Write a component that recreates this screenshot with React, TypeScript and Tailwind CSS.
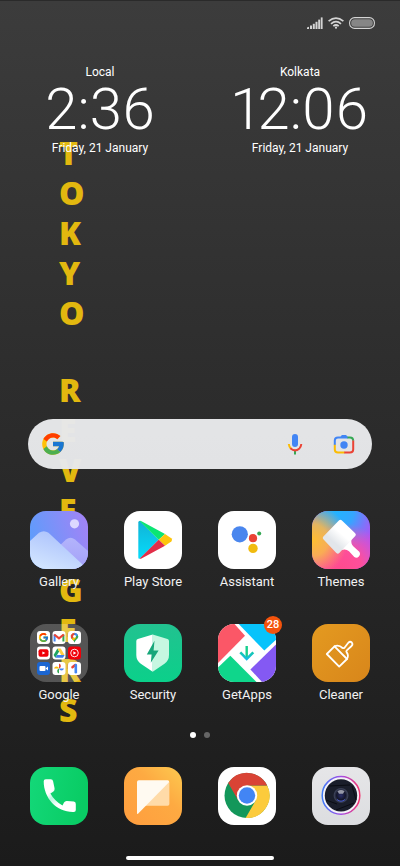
import React from 'react';
import { FcGoogle } from 'react-icons/fc';

interface AppItem {
  name: string;
  icon: React.ReactNode;
  badge?: string;
}

const wallpaperLetters = 'TOKYO REVENGERS'.split('');

const Svg = ({ children }: { children: React.ReactNode }) => (
  <svg viewBox="0 0 58 58" className="size-full" aria-hidden="true">
    {children}
  </svg>
);

const GalleryIcon = () => (
  <Svg>
    <defs>
      <linearGradient id="gal-bg" x1="0" y1="0.6" x2="1" y2="0.3">
        <stop offset="0" stopColor="#5c9dfb" />
        <stop offset="1" stopColor="#a084f6" />
      </linearGradient>
      <linearGradient id="gal-front" x1="0.7" y1="0" x2="0.2" y2="1">
        <stop offset="0" stopColor="#a9bffc" />
        <stop offset="1" stopColor="#d3e6ff" />
      </linearGradient>
      <linearGradient id="gal-back" x1="0" y1="0" x2="0" y2="1">
        <stop offset="0" stopColor="#b3b4fb" />
        <stop offset="1" stopColor="#a3a0f8" />
      </linearGradient>
    </defs>
    <rect width="58" height="58" fill="url(#gal-bg)" />
    <circle cx="44.5" cy="12.8" r="4.6" fill="#dcd9ff" />
    <path d="M24 40 L36 28.5 Q40.5 25 45 28.5 L58 40 V58 H30 Z" fill="url(#gal-back)" />
    <path d="M0 30 L9 21.8 Q13.8 18.5 18.5 21.8 L52 53 Q54 55.5 53 58 H0 Z" fill="url(#gal-front)" />
  </Svg>
);

const PlayIcon = () => (
  <Svg>
    <defs>
      <linearGradient id="play-b" x1="0" y1="0" x2="0" y2="1">
        <stop offset="0" stopColor="#12b3d6" />
        <stop offset="1" stopColor="#05dcfb" />
      </linearGradient>
    </defs>
    <rect width="58" height="58" fill="#fff" />
    <path d="M14.3 11.5 Q14.3 9.5 16 10 L34.7 28.8 L16 47.6 Q14.3 48.2 14.3 46.5 Z" fill="url(#play-b)" />
    <path d="M15.5 9.9 Q16.4 9.6 17.5 10.2 L41 23 L34.7 28.8 Z" fill="#0be574" />
    <path d="M41 23 L47.3 27.2 Q49 28.8 47.3 30.4 L41 34.8 L34.7 28.8 Z" fill="#fdc50c" />
    <path d="M34.7 28.8 L41 34.8 L17.5 47.4 Q16.4 48 15.5 47.7 Z" fill="#e22d48" />
  </Svg>
);

const AssistantIcon = () => (
  <Svg>
    <rect width="58" height="58" fill="#fff" />
    <circle cx="21.8" cy="23.3" r="8.1" fill="#4a86ee" />
    <circle cx="35" cy="27.2" r="4.1" fill="#ea4335" />
    <circle cx="41.2" cy="22.4" r="2" fill="#34a853" />
    <circle cx="35" cy="37.4" r="4.7" fill="#f1bb10" />
  </Svg>
);

const ThemesIcon = () => (
  <Svg>
    <defs>
      <radialGradient id="th-y" cx="0" cy="0.5" r="0.62">
        <stop offset="0" stopColor="#ffbf2e" />
        <stop offset="0.45" stopColor="#fbbc45" stopOpacity="0.85" />
        <stop offset="1" stopColor="#f7b051" stopOpacity="0" />
      </radialGradient>
      <radialGradient id="th-b" cx="0.42" cy="0" r="0.75">
        <stop offset="0" stopColor="#22b4ff" />
        <stop offset="0.4" stopColor="#35a6ff" />
        <stop offset="1" stopColor="#5a8cff" stopOpacity="0" />
      </radialGradient>
      <radialGradient id="th-p" cx="0.5" cy="1" r="0.8">
        <stop offset="0" stopColor="#ff4b8e" />
        <stop offset="0.45" stopColor="#fd4f9b" />
        <stop offset="1" stopColor="#ff58a8" stopOpacity="0" />
      </radialGradient>
      <linearGradient id="th-head" x1="0.2" y1="0.8" x2="0.7" y2="0.2">
        <stop offset="0.2" stopColor="#e2e6ea" />
        <stop offset="0.7" stopColor="#fff" />
      </linearGradient>
    </defs>
    <rect width="58" height="58" fill="#b052f5" />
    <rect width="58" height="58" fill="url(#th-b)" />
    <rect width="58" height="58" fill="url(#th-p)" />
    <rect width="58" height="58" fill="url(#th-y)" />
    <path d="M39.5 28 Q38.5 32.5 41.5 35.5 L47.3 40.8 A3.7 3.7 0 0 1 42.3 46 L37 40.3 Q34 37.5 29.5 39 Z" fill="#fff" />
    <path d="M28.3 10.8 L41.8 23.6 L25.8 40.6 L12.8 26.8 Z" fill="url(#th-head)" stroke="url(#th-head)" strokeWidth="4" strokeLinejoin="round" />
  </Svg>
);

const FolderIcon = () => (
  <Svg>
    <rect width="58" height="58" fill="#fff" fillOpacity="0.23" />
    <g fill="#fff">
      <rect x="7" y="7" width="13" height="13" rx="3" />
      <rect x="22.5" y="7" width="13" height="13" rx="3" />
      <rect x="38" y="7" width="13" height="13" rx="3" />
      <rect x="7" y="22.5" width="13" height="13" rx="3" />
      <rect x="22.5" y="22.5" width="13" height="13" rx="3" />
      <rect x="22.5" y="38" width="13" height="13" rx="3" />
      <rect x="38" y="38" width="13" height="13" rx="3" />
    </g>
    <rect x="38" y="22.5" width="13" height="13" rx="3" fill="#f00008" />
    <rect x="7" y="38" width="13" height="13" rx="3" fill="#1b66d2" />
    {/* Google */}
    <FcGoogle x="8" y="8" size={11} />
    {/* Gmail */}
    <path d="M24.6 17.5 V10.5" stroke="#4285f4" strokeWidth="2" />
    <path d="M33.4 17.5 V10.5" stroke="#34a853" strokeWidth="2" />
    <path d="M24.2 10.5 L29 14.4 L33.8 10.5" fill="none" stroke="#ea4335" strokeWidth="2.2" />
    {/* Maps */}
    <path d="M40.8 12.5 A3.8 3.8 0 0 1 48.3 12.5 C48.3 15 45.4 15.5 44.5 18.8 C43.8 15.5 40.8 15.2 40.8 12.5" fill="#34a853" />
    <path d="M41 11.3 A3.8 3.8 0 0 1 44.5 8.7 V12.5 L41.8 15 Q40.4 13.2 41 11.3" fill="#ea4335" />
    <path d="M44.5 8.7 A3.8 3.8 0 0 1 48 11.2 L44.5 13 Z" fill="#4285f4" />
    <path d="M41.8 15 L44.5 12.5 L46 14 L43.5 16.7 Z" fill="#fbbc04" />
    <circle cx="44.5" cy="12.4" r="1.4" fill="#fff" />
    {/* YouTube */}
    <rect x="8.5" y="25.3" width="10" height="7.4" rx="2" fill="#f00008" />
    <path d="M12.4 27.4 L15.4 29 L12.4 30.6 Z" fill="#fff" />
    {/* Drive */}
    <path d="M27.4 24.5 L23.6 31 L25.3 33.8 L29.2 27.4 Z" fill="#1fa463" />
    <path d="M27.4 24.5 H30.7 L34.6 31 H31.2 Z" fill="#ffcf3f" />
    <path d="M25.3 33.8 L27 31 H34.6 L33 33.8 Z" fill="#3f7fe8" />
    {/* YouTube Music */}
    <circle cx="44.5" cy="29" r="3.8" fill="none" stroke="#fff" strokeWidth="0.9" />
    <path d="M43.4 27.2 L46.3 29 L43.4 30.8 Z" fill="#fff" />
    {/* Duo */}
    <rect x="9.5" y="42" width="6" height="5" rx="1" fill="#fff" />
    <path d="M15.5 44.5 L18 42.5 V46.5 Z" fill="#fff" />
    {/* Photos */}
    <path d="M29 44.5 V39.5 A2.6 2.6 0 0 1 29 44.5" fill="#ea4335" />
    <path d="M29 44.5 H34 A2.6 2.6 0 0 1 29 44.5" fill="#4285f4" />
    <path d="M29 44.5 V49.5 A2.6 2.6 0 0 1 29 44.5" fill="#34a853" />
    <path d="M29 44.5 H24 A2.6 2.6 0 0 1 29 44.5" fill="#fbbc04" />
    {/* One */}
    <path d="M42.4 43.2 L45.2 41" stroke="#ea4335" strokeWidth="2.4" strokeLinecap="round" />
    <path d="M45.8 41 V48.3" stroke="#4285f4" strokeWidth="2.6" strokeLinecap="round" />
  </Svg>
);

const SecurityIcon = () => (
  <Svg>
    <defs>
      <linearGradient id="sec-bg" x1="0" y1="0" x2="0" y2="1">
        <stop offset="0" stopColor="#22c290" />
        <stop offset="1" stopColor="#0bd08a" />
      </linearGradient>
    </defs>
    <rect width="58" height="58" fill="url(#sec-bg)" />
    <path d="M28.7 10.4 L43.5 15 Q45 15.5 45 17 V31 Q45 36.5 40.5 39.7 L28.7 47.8 Z" fill="#c6f7e1" />
    <path d="M28.7 10.4 L13.8 15 Q12.3 15.5 12.3 17 V31 Q12.3 36.5 16.8 39.7 L28.7 47.8 Z" fill="#fff" />
    <path d="M30.5 16.8 L22.8 30.4 H27.6 L26.8 38.8 L34.6 26.4 H29.6 Z" fill="#17a77a" />
  </Svg>
);

const GetAppsIcon = () => (
  <Svg>
    <defs>
      <linearGradient id="ga-arrow" x1="0" y1="21" x2="0" y2="36" gradientUnits="userSpaceOnUse">
        <stop offset="0" stopColor="#16d67c" />
        <stop offset="1" stopColor="#14b9e8" />
      </linearGradient>
    </defs>
    <rect width="58" height="58" fill="#fff" />
    <path d="M0 0 H16.5 L27 11.8 L0 39 Z" fill="#fb5767" />
    <path d="M20.7 0 H58 V15.8 L46.3 26.6 Z" fill="#07c3fb" />
    <path d="M58 20.5 L32.4 45.4 L44 58 H58 Z" fill="#8459f3" />
    <path d="M12.3 31.8 L0 43.5 V58 H38.5 Z" fill="#0fd68b" />
    <path d="M28.7 22 V35" stroke="#16cf8d" strokeWidth="2.4" fill="none" />
    <path d="M22.3 28.3 L28.7 35 L35.3 28.3" stroke="url(#ga-arrow)" strokeWidth="2.6" fill="none" />
  </Svg>
);

const CleanerIcon = () => (
  <Svg>
    <defs>
      <linearGradient id="cl-bg" x1="0" y1="0" x2="1" y2="1">
        <stop offset="0" stopColor="#e49a20" />
        <stop offset="1" stopColor="#d8861b" />
      </linearGradient>
    </defs>
    <rect width="58" height="58" fill="url(#cl-bg)" />
    <g fill="none" stroke="#fff" strokeWidth="1.8" strokeLinejoin="round" strokeLinecap="round">
      <path d="M22.5 22.3 L14.8 30 L27.2 42.6 L35 35 Z" />
      <path d="M22.5 22.3 Q27 20.5 30.5 24 Q31.5 24.5 32.5 23.7 L36.3 18.8 Q38 17 39.8 18.5 Q41.2 20.2 39.6 22 L34.8 26.3 Q33.8 27.3 34.7 28.4 Q37 31.5 35 35" />
    </g>
  </Svg>
);

const PhoneIcon = () => (
  <Svg>
    <defs>
      <linearGradient id="ph-bg" x1="0" y1="0" x2="1" y2="0.2">
        <stop offset="0" stopColor="#14d879" />
        <stop offset="1" stopColor="#09cc64" />
      </linearGradient>
      <linearGradient id="ph-line" x1="14" y1="12" x2="45" y2="45" gradientUnits="userSpaceOnUse">
        <stop offset="0.3" stopColor="#fff" />
        <stop offset="0.42" stopColor="#b8f7e0" />
        <stop offset="0.62" stopColor="#fff" />
      </linearGradient>
    </defs>
    <rect width="58" height="58" fill="url(#ph-bg)" />
    <path
      d="M13.7 14.3 Q13.7 12.3 15.8 12.3 H20.8 Q22.8 12.3 23.1 14.3 L24.6 21.5 Q25 23.6 23.2 24.7 L20.4 26.5 Q24.5 34 32.5 38.5 L34 35.6 Q35 33.8 37 34 L43.8 34.6 Q45.8 35 45.8 37 V43 Q45.8 45 43.8 45 C27 45.5 13.7 31.5 13.7 14.3 Z"
      fill="url(#ph-line)"
    />
  </Svg>
);

const MessagesIcon = () => (
  <Svg>
    <defs>
      <linearGradient id="ms-bg" x1="0" y1="1" x2="1" y2="0">
        <stop offset="0" stopColor="#ff9d3e" />
        <stop offset="0.6" stopColor="#fdaa42" />
        <stop offset="1" stopColor="#fdca50" />
      </linearGradient>
    </defs>
    <rect width="58" height="58" fill="url(#ms-bg)" />
    <path d="M43.5 14.5 L45.4 15 V37 Q45.4 38.8 43.6 38.8 H20.5 Z" fill="#ffdba8" />
    <path d="M13 15 Q13 13.3 14.8 13.3 H43.6 Q45.4 13.3 45.2 15 L14 46.8 Q13 47.5 13 46 Z" fill="#fffaf1" />
  </Svg>
);

const ChromeIcon = () => (
  <Svg>
    <rect width="58" height="58" fill="#fff" />
    <circle cx="29" cy="28.5" r="22.5" fill="#13975a" />
    <path d="M49.2 18.5 A22.5 22.5 0 0 1 27.6 51 L37.7 33.5 L29 28.5 V18.5 Z" fill="#fccb3c" />
    <path d="M49.2 18.5 A22.5 22.5 0 0 0 10.2 16 L20.3 33.5 L29 28.5 V18.5 Z" fill="#d94335" />
    <circle cx="29" cy="28.5" r="10.2" fill="#fff" />
    <circle cx="29" cy="28.5" r="8.2" fill="#4285f4" />
  </Svg>
);

const CameraIcon = () => (
  <Svg>
    <defs>
      <linearGradient id="cam-bg" x1="0" y1="0" x2="0" y2="1">
        <stop offset="0" stopColor="#e6e6e8" />
        <stop offset="1" stopColor="#dcdde0" />
      </linearGradient>
      <linearGradient id="cam-ring" x1="0" y1="0.6" x2="1" y2="0.6">
        <stop offset="0" stopColor="#3f7bf7" />
        <stop offset="0.5" stopColor="#a44de6" />
        <stop offset="1" stopColor="#f4356f" />
      </linearGradient>
      <radialGradient id="cam-lens">
        <stop offset="0" stopColor="#2a2f6a" />
        <stop offset="0.55" stopColor="#14162b" />
        <stop offset="0.85" stopColor="#3b4157" />
        <stop offset="1" stopColor="#171b28" />
      </radialGradient>
    </defs>
    <rect width="58" height="58" fill="url(#cam-bg)" />
    <circle cx="29" cy="28.4" r="18.8" fill="#f4f2f8" stroke="url(#cam-ring)" strokeWidth="1.5" />
    <circle cx="29" cy="28.4" r="16.2" fill="#1a1e2b" />
    <path d="M17 19 L38 18 M40 19 L44 33 M42 36 L24 43 M14 33 L25 37" stroke="#0b0d14" strokeWidth="1" />
    <circle cx="29" cy="28.4" r="8" fill="url(#cam-lens)" />
    <path d="M25.5 24.3 Q29 21.8 32.5 24.3 L31 26.8 H27 Z" fill="#b6b9c6" fillOpacity="0.8" />
    <path d="M25 32.5 Q29 36 33 32.5" fill="none" stroke="#4256c8" strokeWidth="1" />
  </Svg>
);

const apps: AppItem[] = [
  { name: 'Gallery', icon: <GalleryIcon /> },
  { name: 'Play Store', icon: <PlayIcon /> },
  { name: 'Assistant', icon: <AssistantIcon /> },
  { name: 'Themes', icon: <ThemesIcon /> },
  { name: 'Google', icon: <FolderIcon /> },
  { name: 'Security', icon: <SecurityIcon /> },
  { name: 'GetApps', icon: <GetAppsIcon />, badge: '28' },
  { name: 'Cleaner', icon: <CleanerIcon /> },
];

const dock: AppItem[] = [
  { name: 'Phone', icon: <PhoneIcon /> },
  { name: 'Messages', icon: <MessagesIcon /> },
  { name: 'Chrome', icon: <ChromeIcon /> },
  { name: 'Camera', icon: <CameraIcon /> },
];

const Tile = ({ icon }: { icon: React.ReactNode }) => (
  <span className="block size-[58px] overflow-hidden rounded-2xl">{icon}</span>
);

const StatusBar = () => (
  <header className="flex h-11 items-center justify-end gap-[5px] pr-[25px] text-[#d4d4d4]">
    <svg width="16" height="12" viewBox="0 0 16 12" fill="currentColor" aria-label="Signal">
      <path d="M0 12 V10.5 L2 9.7 V12 Z" />
      <rect x="3" y="8.5" width="2" height="3.5" />
      <rect x="5.8" y="6.8" width="2" height="5.2" />
      <rect x="8.5" y="4.8" width="2" height="7.2" />
      <rect x="11.2" y="2.6" width="2" height="9.4" />
      <rect x="13.8" y="0.4" width="1.8" height="11.6" />
    </svg>
    <svg width="16" height="12" viewBox="0 0 16 12" fill="none" stroke="currentColor" strokeWidth="1.7" aria-label="Wi-Fi">
      <path d="M0.6 4.2 Q8 -2 15.4 4.2" />
      <path d="M3 6.8 Q8 2.4 13 6.8" />
      <path d="M5.3 9.2 Q8 6.8 10.7 9.2" />
      <circle cx="8" cy="10.7" r="1.1" fill="currentColor" stroke="none" />
    </svg>
    <svg width="26" height="12" viewBox="0 0 26 12" aria-label="Battery">
      <rect x="0.6" y="0.6" width="24.8" height="10.8" rx="5" fill="none" stroke="#d4d4d4" strokeWidth="1.1" />
      <rect x="2.2" y="2.2" width="21.6" height="7.6" rx="3.6" fill="#868686" />
    </svg>
  </header>
);

const Clock = ({ place, time }: { place: string; time: string }) => (
  <div className="text-center text-white">
    <p className="text-xs leading-5">{place}</p>
    <p className="text-[58px] leading-[54px] font-light proportional-nums">{time}</p>
    <p className="mt-0.5 text-xs leading-5">Friday, 21 January</p>
  </div>
);

const SearchBar = () => (
  <form className="mx-7 flex h-[50px] items-center rounded-full bg-[#e7e8ea]/98 pr-4 pl-3">
    <FcGoogle className="size-[26px] shrink-0" aria-hidden="true" />
    <input type="search" aria-label="Search" className="min-w-0 flex-1 bg-transparent px-2 text-sm text-[#222] outline-none" />
    <button type="button" aria-label="Voice search">
      <svg width="24" height="24" viewBox="0 0 24 24" fill="none" strokeWidth="2">
        <rect x="9" y="2" width="6" height="13" rx="3" fill="#4285f4" />
        <path d="M12 18 V22.5" stroke="#34a853" />
        <path d="M5.8 12 Q6.1 15 8 16.8" stroke="#fbbc04" />
        <path d="M7.4 16.2 Q12 20.4 16.4 16.4 Q18 14.8 18.3 12" stroke="#ea4335" />
      </svg>
    </button>
    <button type="button" aria-label="Search with camera" className="ml-[25px]">
      <svg width="24" height="24" viewBox="0 0 24 24" fill="none" strokeWidth="2">
        <path d="M8.2 5.4 L9.8 3 H14.2 L15.8 5.4 Z" fill="#4285f4" />
        <path d="M2.8 13 V8.5 Q2.8 5.4 6 5.4 H16" stroke="#4285f4" />
        <path d="M15.5 5.4 H18 Q21.2 5.4 21.2 8.8" stroke="#34a853" />
        <path d="M21.2 8.5 V17.5 Q21.2 20.6 18 20.6 H12" stroke="#ea4335" />
        <path d="M12.3 20.6 H6 Q2.8 20.6 2.8 17.5 V12.7" stroke="#fbbc04" />
        <circle cx="12" cy="13" r="3.7" fill="#4285f4" />
      </svg>
    </button>
  </form>
);

const App = () => {
  return (
    <div className="relative flex min-h-screen flex-col overflow-hidden border-t border-[#2a2a2a] bg-linear-to-b from-[#3c3c3c] to-[#1b1b1b] font-['Roboto',sans-serif]">
      {/* wallpaper lettering, sits behind everything */}
      <div
        aria-hidden="true"
        className="absolute top-[132px] left-[59px] flex h-[597px] flex-col justify-between font-['Open_Sans',sans-serif] text-[32px] leading-10 font-extrabold text-[#e2b80f]"
      >
        {wallpaperLetters.map((letter, i) => (
          <span key={i} className="h-10">{letter}</span>
        ))}
      </div>

      <div className="relative flex flex-1 flex-col">
        <StatusBar />

        <section className="mt-[17px] grid grid-cols-2">
          <Clock place="Local" time="2:36" />
          <Clock place="Kolkata" time="12:06" />
        </section>

        <div className="min-h-8 flex-1" />

        <SearchBar />

        <main className="mt-[42px] grid grid-cols-4 gap-y-[33px] px-3">
          {apps.map((app) => (
            <button key={app.name} type="button" className="flex flex-col items-center">
              <span className="relative">
                <Tile icon={app.icon} />
                {app.badge && (
                  <span className="absolute -top-2 -right-1.5 flex size-[18px] items-center justify-center rounded-full bg-[#f4530c] text-[11px] font-medium text-white">
                    {app.badge}
                  </span>
                )}
              </span>
              <span className="mt-1 text-[13px] leading-[18px] text-[#f2f2f2]">{app.name}</span>
            </button>
          ))}
        </main>

        <div className="mt-7 flex justify-center gap-2">
          <span className="size-1.5 rounded-full bg-white" />
          <span className="size-1.5 rounded-full bg-[#666]" />
        </div>

        <nav className="mt-[29px] grid grid-cols-4 px-3">
          {dock.map((app) => (
            <button key={app.name} type="button" aria-label={app.name} className="flex justify-center">
              <Tile icon={app.icon} />
            </button>
          ))}
        </nav>

        <button type="button" aria-label="Home" className="mt-[31px] mb-1.5 h-1 w-[37%] self-center rounded-full bg-white" />
      </div>
    </div>
  );
};

export default App;
